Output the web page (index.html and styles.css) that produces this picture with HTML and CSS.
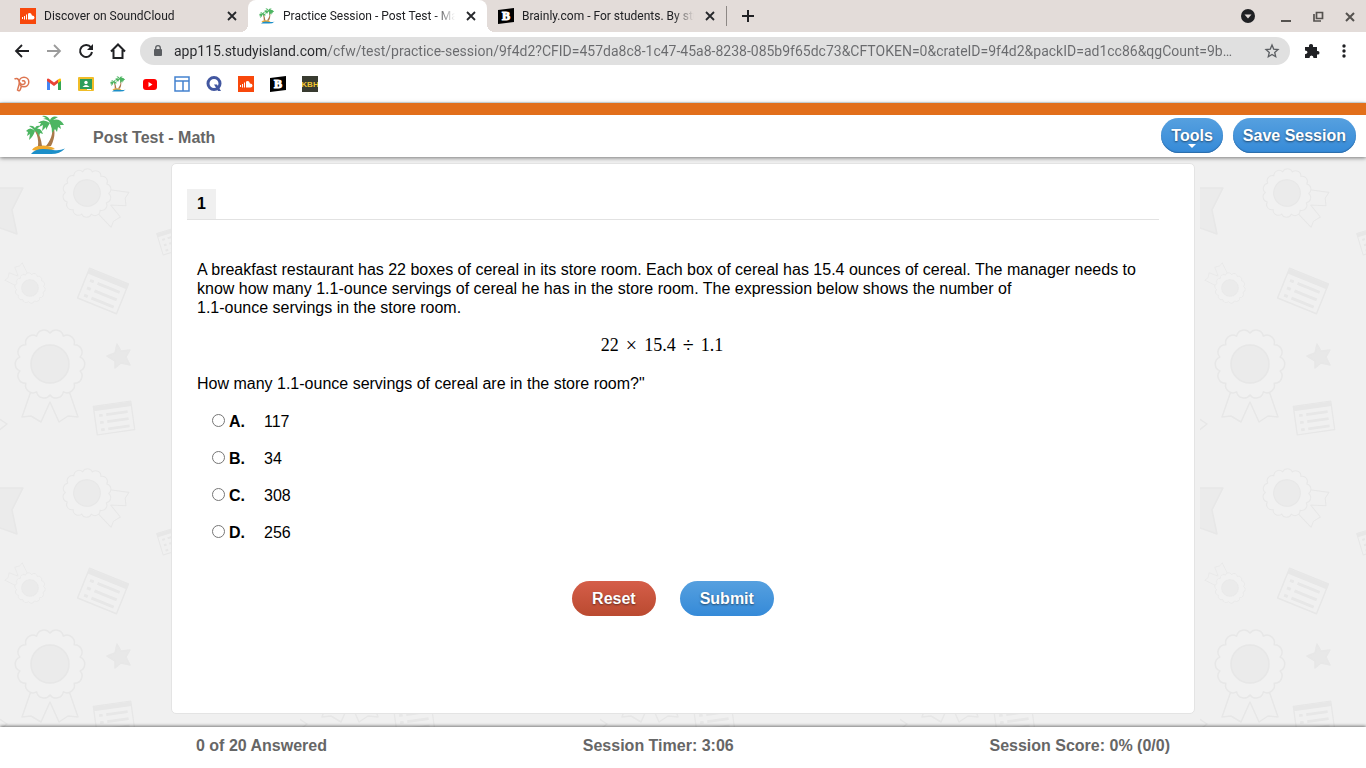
FILE: index.html
```
<!DOCTYPE html>
<html lang="en">
  <head>
    <meta charset="UTF-8" />
    <meta name="viewport" content="width=device-width, initial-scale=1.0" />
    <title>Practice Session - Post Test - Math</title>
    <link rel="stylesheet" href="styles.css">
  </head>
  <body>
    <!-- shared icons -->
    <svg class="sprite" aria-hidden="true">
      <symbol id="palm" viewBox="0 0 40 40">
        <path d="M6 35Q8 31 15 30.500Q24 30 29 34L18 37Z" fill="#f0a92c" />
        <path d="M5 39Q9 34 17 34Q22 34 27 35Q34 36 39 33.500Q34 39 25 39Z" fill="#1c8fc9" />
        <path d="M24 8Q30 18 20 31L25 31Q32 17 25 7Z" fill="#a9794a" />
        <path d="M9 16Q13 23 12 31L16 31Q15 21 10 15Z" fill="#a9794a" />
        <path d="M24 8Q17 3 12 8L15 8L13 12L17 10L16 16L20 12L20 15Q22 11 24 8Q26 12 26 18L29 14L31 17L32 12L35 14L34 10L38 10Q34 3 27 5L32 2Q26 0 24 5Q21 0 16 1L20 3L17 4Q22 4 24 8Z" fill="#4db562" />
        <path d="M9 16Q4 11 0 16L2 17L1 21L4 19L3 25Q7 22 9 16Q12 17 13 22L14 18L17 19Q15 13 11 14L14 11Q10 10 9 13Q7 10 3 11L6 13Z" fill="#4db562" />
      </symbol>
      <symbol id="soundcloud" viewBox="0 0 16 16">
        <rect width="16" height="16" fill="#f8480c" />
        <path d="M2.500 9v2M4.500 8v3.500M6.500 6.500v5" stroke="#fff" />
        <path d="M8 11.500V5.500Q11 4 12 7.500Q14.500 7.500 14.500 9.500Q14.500 11.500 12.500 11.500Z" fill="#fff" />
      </symbol>
      <symbol id="brainly" viewBox="0 0 16 16">
        <path d="M0 2L16 0V14L0 16Z" fill="#000" />
        <text x="8" y="12" class="brainly-letter">B</text>
      </symbol>
      <symbol id="close" viewBox="0 0 16 16">
        <path d="M4 4L12 12M12 4L4 12" stroke="#26282b" stroke-width="1.800" />
      </symbol>
    </svg>

    <div class="browser">
      <div class="tabs">
        <div class="tab first">
          <svg class="icon"><use href="#soundcloud" /></svg>
          <button class="tab-title">Discover on SoundCloud</button>
          <button class="tab-close" aria-label="Close tab"><svg class="icon"><use href="#close" /></svg></button>
        </div>
        <div class="tab active">
          <svg class="icon"><use href="#palm" /></svg>
          <button class="tab-title">Practice Session - Post Test - Math</button>
          <button class="tab-close" aria-label="Close tab"><svg class="icon"><use href="#close" /></svg></button>
        </div>
        <div class="tab">
          <svg class="icon"><use href="#brainly" /></svg>
          <button class="tab-title">Brainly.com - For students. By students.</button>
          <button class="tab-close" aria-label="Close tab"><svg class="icon"><use href="#close" /></svg></button>
        </div>
        <button class="new-tab" aria-label="New tab">
          <svg class="icon" viewBox="0 0 16 16"><path d="M8 2V14M2 8H14" stroke="#202124" stroke-width="2" /></svg>
        </button>
        <div class="window-buttons">
          <button class="tab-search" aria-label="Search tabs">
            <svg class="icon" viewBox="0 0 16 16"><circle cx="8" cy="8" r="7" fill="#202124" /><path d="M4.500 6.500H11.500L8 10.500Z" fill="#e3dcd9" /></svg>
          </button>
          <button aria-label="Minimize">
            <svg class="icon" viewBox="0 0 16 16"><path d="M3 13H13" stroke="#55524f" stroke-width="2" /></svg>
          </button>
          <button aria-label="Restore">
            <svg class="icon" viewBox="0 0 16 16"><path d="M6.500 4.500H12.500V10.500H6.500ZM4 6V13H11" fill="none" stroke="#55524f" stroke-width="1.700" /></svg>
          </button>
          <button aria-label="Close window">
            <svg class="icon" viewBox="0 0 16 16"><path d="M4 5L12 13M12 5L4 13" stroke="#55524f" stroke-width="2" /></svg>
          </button>
        </div>
      </div>

      <div class="toolbar">
        <div class="nav">
          <button aria-label="Back">
            <svg class="icon" viewBox="0 0 16 16"><path d="M15 8H2M8 2L2 8L8 14" fill="none" stroke="#202124" stroke-width="1.800" /></svg>
          </button>
          <button aria-label="Forward">
            <svg class="icon" viewBox="0 0 16 16"><path d="M1 8H14M8 2L14 8L8 14" fill="none" stroke="#9b9b9b" stroke-width="1.800" /></svg>
          </button>
          <button aria-label="Reload">
            <svg class="icon" viewBox="0 0 16 16"><path d="M13 4.500A6 6 0 1 0 14 9" fill="none" stroke="#202124" stroke-width="2" /><path d="M15 1V7H9Z" fill="#202124" /></svg>
          </button>
          <button aria-label="Home">
            <svg class="icon" viewBox="0 0 16 16"><path d="M1 8.500L8 1.500L15 8.500M3.500 7V15H12.500V7" fill="none" stroke="#202124" stroke-width="2" /></svg>
          </button>
        </div>
        <div class="address">
          <svg class="icon" viewBox="0 0 16 16"><rect x="4" y="6" width="8" height="7" rx="1" fill="#5a5d61" /><path d="M5.700 7V5A2.300 2.300 0 0 1 10.300 5V7" fill="none" stroke="#5a5d61" stroke-width="1.300" /></svg>
          <input type="text" class="url" aria-label="Address" value="app115.studyisland.com/cfw/test/practice-session/9f4d2?CFID=457da8c8-1c47-45a8-8238-085b9f65dc73&amp;CFTOKEN=0&amp;crateID=9f4d2&amp;packID=ad1cc86&amp;qgCount=9b…" />
          <button class="bookmark" aria-label="Bookmark this page">
            <svg class="icon" viewBox="0 0 16 16"><path d="M8 2L9.700 6.100L14 6.500L10.700 9.400L11.700 13.700L8 11.400L4.300 13.700L5.300 9.400L2 6.500L6.300 6.100Z" fill="none" stroke="#5a5d61" stroke-width="1.300" /></svg>
          </button>
        </div>
        <div class="nav">
          <button aria-label="Extensions">
            <svg class="icon" viewBox="0 0 16 16"><path d="M1 4H5Q4.500 1 7 1Q9.500 1 9 4H13V8Q15.500 7.500 15.500 9.700Q15.500 12 13 11.500V15H9.500Q9.500 12.500 7.500 12.500Q5.500 12.500 5.500 15H1V11.200Q3.500 11 3.500 9.300Q3.500 7.500 1 7.500Z" fill="#202124" /></svg>
          </button>
          <button aria-label="Menu">
            <svg class="icon" viewBox="0 0 16 16"><g fill="#202124"><circle cx="8" cy="3" r="1.700" /><circle cx="8" cy="8" r="1.700" /><circle cx="8" cy="13" r="1.700" /></g></svg>
          </button>
        </div>
      </div>

      <nav class="bookmarks">
        <a href="#" aria-label="Pear Deck"><svg class="icon" viewBox="0 0 16 16"><g fill="none" stroke="#dd7550" stroke-width="1.500"><circle cx="10" cy="6" r="4.800" /><path d="M0.500 3Q4 1 5.500 6Q6.500 9 9 8.500Q11.500 8 11 6Q10 4 8 5M5.500 7L3.500 14Q5.500 16 6.500 13L7.500 10" /></g></svg></a>
        <a href="#" aria-label="Gmail"><svg class="icon" viewBox="0 0 16 16"><path d="M1 4L4 6V14H1Z" fill="#4285f4" /><path d="M12 6L15 4V14H12Z" fill="#34a853" /><path d="M1 3Q2 2 4 3.500L8 6.500L12 3.500V7L8 10L1 5Z" fill="#ea4335" /><path d="M12 3.500Q15 1.500 15 4V5L12 7Z" fill="#fbbc04" /></svg></a>
        <a href="#" aria-label="Classroom"><svg class="icon" viewBox="0 0 16 16"><rect y="1" width="16" height="14" rx="1" fill="#f0bd28" /><rect x="2" y="3" width="12" height="10" fill="#2c9c5a" /><circle cx="8" cy="6.500" r="1.700" fill="#fff" /><path d="M4.500 11Q8 7 11.500 11Z" fill="#fff" /><path d="M9 13H13V14H9Z" fill="#fff" /></svg></a>
        <a href="#" aria-label="Study Island"><svg class="icon"><use href="#palm" /></svg></a>
        <a href="#" aria-label="YouTube"><svg class="icon" viewBox="0 0 16 16"><rect x="1" y="3" width="14" height="11" rx="3" fill="#f00" /><path d="M6.500 6L10.500 8.500L6.500 11Z" fill="#fff" /></svg></a>
        <a href="#" aria-label="Planner"><svg class="icon" viewBox="0 0 16 16"><path d="M1 1H15V15H1ZM1 5H15M9 5V15" fill="#fff" stroke="#4482cf" stroke-width="1.500" /></svg></a>
        <a href="#" aria-label="Quizlet"><svg class="icon" viewBox="0 0 16 16"><circle cx="8" cy="7.500" r="6" fill="none" stroke="#4257a0" stroke-width="3" /><path d="M8 8.500H11L15 15H12Z" fill="#4257a0" /></svg></a>
        <a href="#" aria-label="SoundCloud"><svg class="icon"><use href="#soundcloud" /></svg></a>
        <a href="#" aria-label="Brainly"><svg class="icon"><use href="#brainly" /></svg></a>
        <a href="#" aria-label="KBH"><svg class="icon" viewBox="0 0 16 16"><rect width="16" height="16" fill="#383b30" /><text x="8" y="11" class="kbh-letters">KBH</text></svg></a>
      </nav>
    </div>

    <header class="header">
      <svg class="logo" role="img" aria-label="Study Island"><use href="#palm" /></svg>
      <h1>Post Test - Math</h1>
      <button class="btn small tools">Tools</button>
      <button class="btn small">Save Session</button>
    </header>

    <main class="main">
      <form class="card">
        <div class="number-row"><span class="number">1</span></div>
        <div class="question">
          <p>A breakfast restaurant has 22 boxes of cereal in its store room. Each box of cereal has 15.4 ounces of cereal. The manager needs to know how many 1.1-ounce servings of cereal he has in the store room. The expression below shows the number of<br>1.1-ounce servings in the store room.</p>
          <p class="expression"><span>22</span><span class="operator">×</span><span>15.4</span><span class="operator">÷</span><span>1.1</span></p>
          <p>How many 1.1-ounce servings of cereal are in the store room?"</p>
          <div class="answers">
            <label><input type="radio" name="answer" value="A" /><b>A.</b>117</label>
            <label><input type="radio" name="answer" value="B" /><b>B.</b>34</label>
            <label><input type="radio" name="answer" value="C" /><b>C.</b>308</label>
            <label><input type="radio" name="answer" value="D" /><b>D.</b>256</label>
          </div>
        </div>
        <div class="actions">
          <button type="reset" class="btn red">Reset</button>
          <button type="button" class="btn">Submit</button>
        </div>
      </form>
    </main>

    <footer class="footer">
      <div class="status">
        <span>0 of 20 Answered</span>
        <span>Session Timer: 3:06</span>
        <span>Session Score: 0% (0/0)</span>
      </div>
    </footer>
  </body>
</html>
```
FILE: styles.css
```
* {
  box-sizing: border-box;
}

body {
  margin: 0;
  min-height: 100vh;
  display: flex;
  flex-direction: column;
  font-family: "Liberation Sans", Arial, sans-serif;
  font-size: 16px;
  line-height: 19px;
  color: #000;
  background-color: #fff;
}

button {
  border: none;
  padding: 0;
  background: none;
  font-family: inherit;
  cursor: pointer;
}

.sprite {
  display: none;
}

.icon {
  display: block;
  flex: none;
  width: 16px;
  height: 16px;
}

.brainly-letter {
  font: bold 12px "Liberation Serif", serif;
  fill: #fff;
  stroke: #fff;
  text-anchor: middle;
}

.kbh-letters {
  font: bold 8px "Liberation Sans", sans-serif;
  fill: #f2c530;
  text-anchor: middle;
}

/* Browser */
.browser {
  font-family: Roboto, sans-serif;
  border-bottom: 1px solid #dfe8ea;
}

.tabs {
  display: flex;
  align-items: center;
  height: 33px;
  padding-bottom: 1px;
  background: linear-gradient(#e3dcd9 32px, #fff 32px);
}

.tab {
  position: relative;
  display: flex;
  align-items: center;
  gap: 8px;
  width: 239px;
  height: 32px;
  padding: 0 8px 0 11px;
}

.tab.first {
  width: 248px;
  padding-left: 20px;
}

.tab.active {
  background-color: #fff;
  border-radius: 8px 8px 0 0;
}

.tab.active::before,
.tab.active::after {
  content: "";
  position: absolute;
  bottom: 0;
  width: 8px;
  height: 8px;
}

.tab.active::before {
  left: -8px;
  background: radial-gradient(circle at 0 0, transparent 8px, #fff 8px);
}

.tab.active::after {
  right: -8px;
  background: radial-gradient(circle at 100% 0, transparent 8px, #fff 8px);
}

.tab-title {
  flex: 1;
  min-width: 0;
  overflow: hidden;
  white-space: nowrap;
  text-align: left;
  font-size: 12px;
  line-height: 16px;
  color: #202124;
  -webkit-mask-image: linear-gradient(to right, #000 88%, transparent);
  mask-image: linear-gradient(to right, #000 88%, transparent);
}

.new-tab {
  display: flex;
  align-items: center;
  justify-content: center;
  width: 43px;
  height: 20px;
  border-left: 1px solid #8d8885;
}

.window-buttons,
.nav {
  display: flex;
}

.window-buttons {
  margin-left: auto;
}

.window-buttons button,
.nav button {
  display: flex;
  align-items: center;
  justify-content: center;
  width: 32px;
  height: 28px;
}

.window-buttons .tab-search {
  margin-right: 6px;
}

.toolbar {
  display: flex;
  align-items: center;
  gap: 6px;
  height: 36px;
  padding: 0 6px;
}

.address {
  flex: 1;
  display: flex;
  align-items: center;
  gap: 8px;
  height: 28px;
  padding: 0 10px;
  border-radius: 14px;
  background-color: #e0e0e0;
}

/* dark host name, grey path */
.url {
  flex: 1;
  min-width: 0;
  padding: 0;
  border: none;
  outline: none;
  font-family: inherit;
  font-size: 14px;
  line-height: 20px;
  color: transparent;
  background: linear-gradient(to right, #28292c 154px, #696a6d 154px);
  -webkit-background-clip: text;
  background-clip: text;
}

.bookmarks {
  display: flex;
  align-items: center;
  gap: 16px;
  height: 33px;
  padding: 0 14px 3px;
}

/* Page header */
.header {
  position: relative;
  display: flex;
  align-items: center;
  gap: 10px;
  min-height: 54px;
  padding: 0 10px 2px 26px;
  border-top: 12px solid #e26f1b;
  background-color: #fff;
  box-shadow: 0 1px 4px rgba(0, 0, 0, 0.5);
}

.logo {
  width: 40px;
  height: 40px;
}

.header h1 {
  flex: 1;
  margin: 5px 0 0 17px;
  font-size: 16px;
  color: #666;
}

.btn {
  height: 35px;
  padding: 0 20px;
  border-radius: 18px;
  font-size: 16px;
  font-weight: bold;
  line-height: 19px;
  color: #fff;
  text-shadow: 0 1px 2px rgba(0, 0, 0, 0.5);
  background: linear-gradient(#56a0df, #358ad8);
}

.btn.red {
  background: linear-gradient(#d55e49, #ba4a30);
}

.btn.small {
  padding: 0 10px;
  box-shadow: inset 0 -1px 1px #2b6ba8;
}

.tools {
  position: relative;
}

.tools::after {
  content: "";
  position: absolute;
  left: 50%;
  bottom: 5px;
  margin-left: -4px;
  border: 4px solid transparent;
  border-top-color: #fff;
  border-bottom: none;
}

/* Question */
.main {
  flex: 1;
  display: flex;
  justify-content: center;
  padding: 6px 16px 13px;
  background-color: #f0f0f0;
  background-image: url("data:image/svg+xml,%3Csvg xmlns='http://www.w3.org/2000/svg' width='300' height='300' fill='none' stroke='%23e7e7e7' stroke-width='1.500' stroke-linejoin='round'%3E%3Cdefs%3E%3Cg id='b'%3E%3Cpath d='M-19 27L-28 53L-19 52L-9 58L0 38L9 58L18 52L28 53L19 27'/%3E%3Cpath fill='%23f1f1f1' d='M0-31A7.500 7.500 0 0 1 13.400-27.900A7.500 7.500 0 0 1 24.200-19.300A7.500 7.500 0 0 1 30.200-6.900A7.500 7.500 0 0 1 30.200 6.900A7.500 7.500 0 0 1 24.200 19.300A7.500 7.500 0 0 1 13.400 27.900A7.500 7.500 0 0 1 0 31A7.500 7.500 0 0 1-13.400 27.900A7.500 7.500 0 0 1-24.200 19.300A7.500 7.500 0 0 1-30.200 6.900A7.500 7.500 0 0 1-30.200-6.900A7.500 7.500 0 0 1-24.200-19.300A7.500 7.500 0 0 1-13.400-27.900A7.500 7.500 0 0 1 0-31Z'/%3E%3Ccircle r='19' fill='%23ebebeb'/%3E%3C/g%3E%3Cg id='l'%3E%3Cpath d='M-21-16H21V16H-21Z'/%3E%3Cpath d='M-21-13H21' stroke-width='5'/%3E%3Cpath stroke-width='3' d='M-16-5H-12M-8-5H16M-16 3H-12M-8 3H16M-16 11H-12M-8 11H16'/%3E%3C/g%3E%3C/defs%3E%3Cpath fill='%23ebebeb' d='M-3 31H23L12 53L17 77L-3 70Z'/%3E%3Cuse href='%23b' transform='translate(87 36) rotate(-63) scale(.7)'/%3E%3Cuse href='%23l' transform='translate(174 83) rotate(-17) scale(.7)'/%3E%3Cuse href='%23b' transform='translate(30 131) rotate(135) scale(.44)'/%3E%3Cuse href='%23l' transform='translate(103 134) rotate(22)'/%3E%3Cuse href='%23b' transform='translate(50 207)'/%3E%3Cpath fill='%23e8e8e8' d='M117 187L121 194L130 193L126 200L130 208L121 206L115 211L115 204L107 199L115 196Z'/%3E%3Cuse href='%23l' transform='translate(114 261) rotate(-8) scale(.9)'/%3E%3Cpath d='M-2 261L7 267L-2 274'/%3E%3C/svg%3E");
}

.card {
  width: 100%;
  max-width: 1024px;
  padding: 25px 35px 24px 15px;
  border: 1px solid #e4e4e4;
  border-radius: 5px;
  background-color: #fff;
}

.number-row {
  display: flex;
  border-bottom: 1px solid #e2e2e2;
}

.number {
  padding: 5px 10px 6px;
  font-weight: bold;
  background-color: #f0f0f0;
}

.question {
  padding: 40px 10px 0;
}

.question p {
  margin: 0 0 19px;
}

.question .expression {
  display: flex;
  justify-content: center;
  gap: 7px;
  padding-right: 22px;
  font-family: "Liberation Serif", serif;
  font-size: 18px;
}

.operator {
  font-size: 20px;
}

.answers {
  display: flex;
  flex-direction: column;
  align-items: flex-start;
  gap: 18px;
  padding-left: 15px;
}

.answers label {
  display: flex;
}

.answers input {
  width: 13px;
  height: 13px;
  margin: 2px 4px 0 0;
}

.answers b {
  width: 35px;
}

.actions {
  display: flex;
  justify-content: center;
  gap: 24px;
  margin-top: 39px;
}

/* Footer */
.footer {
  position: relative;
  padding: 9px 16px 13px;
  background-color: #fff;
  box-shadow: 0 -1px 3px rgba(0, 0, 0, 0.5);
}

.status {
  display: flex;
  justify-content: space-between;
  max-width: 974px;
  margin: 0 auto;
  font-weight: bold;
  color: #666;
}
```
